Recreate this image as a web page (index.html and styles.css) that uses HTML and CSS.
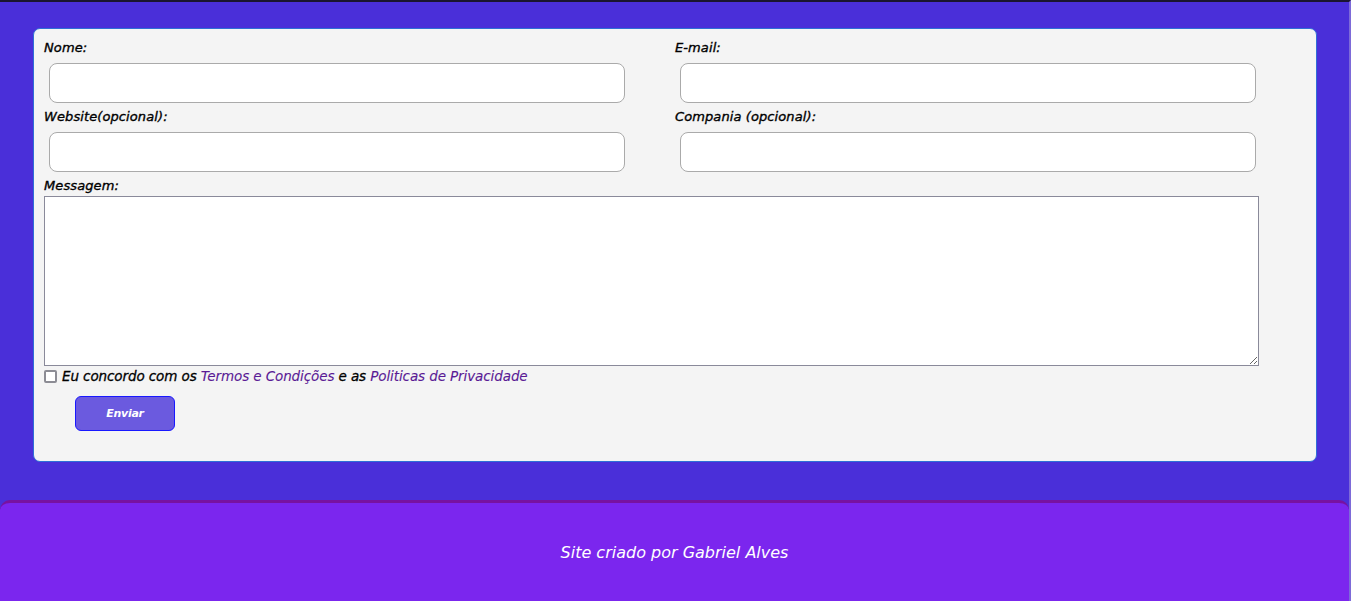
FILE: index.html
```html
<!DOCTYPE html>
<html lang="pt">
<head>
<meta charset="utf-8">
<title>Contato</title>
<link rel="stylesheet" href="styles.css">
</head>
<body>
<main class="page">
  <form class="card">
    <div class="grid">
      <div class="field">
        <label class="label">Nome:</label>
        <input class="input" type="text">
      </div>
      <div class="field">
        <label class="label">E-mail:</label>
        <input class="input" type="text">
      </div>
      <div class="field">
        <label class="label">Website(opcional):</label>
        <input class="input" type="text">
      </div>
      <div class="field">
        <label class="label">Compania (opcional):</label>
        <input class="input" type="text">
      </div>
    </div>
    <label class="label">Messagem:</label>
    <textarea class="textarea"></textarea>
    <div class="agree">
      <span class="check"></span>
      <span>Eu concordo com os <a class="link">Termos e Condições</a> e as <a class="link">Politicas de Privacidade</a></span>
    </div>
    <button class="btn" type="button">Enviar</button>
  </form>
</main>
<footer class="footer">
  <p>Site criado por Gabriel Alves</p>
</footer>
</body>
</html>
```
FILE: styles.css
```css
* { box-sizing: border-box; }
html, body { margin: 0; height: 100%; }
body {
  background: #4a2fd9;
  font-family: "DejaVu Sans", "Open Sans", sans-serif;
  font-style: italic;
  border-top: 2px solid #1a1530;
  border-right: 2px solid #7d6ad8;
  overflow: hidden;
}
.page {
  padding: 26px 0 38px 33px;
}
.card {
  width: 1284px;
  height: 434px;
  background: #f4f4f4;
  border: 1px solid #2f6fd6;
  border-radius: 7px;
  padding: 9px 10px 0 10px;
}
.grid {
  display: grid;
  grid-template-columns: 631px 631px;
}
.field { display: flex; flex-direction: column; }
.label {
  display: block;
  font-size: 13px;
  color: #000;
  height: 20px;
  line-height: 20px;
  letter-spacing: 0.1px;
  -webkit-text-stroke: 0.35px #000;
}
.input {
  margin: 5px 0 4px 5px;
  width: 576px;
  height: 40px;
  border: 1px solid #aaa;
  border-radius: 8px;
  background: #fff;
}
.textarea {
  display: block;
  margin: 0;
  width: 1215px;
  height: 170px;
  border: 1px solid #8a8a9a;
  background: #fff;
  resize: both;
}
.agree {
  display: flex;
  align-items: center;
  gap: 5px;
  height: 20px;
  font-size: 13.5px;
  letter-spacing: -0.1px;
  -webkit-text-stroke: 0.3px #000;
}
.check {
  display: block;
  width: 13px;
  height: 13px;
  border: 2px solid #8c8c94;
  border-radius: 2px;
  background: #fff;
}
.link { color: #5a1a95; -webkit-text-stroke: 0.1px #5a1a95; }
.btn {
  display: block;
  margin: 10px 0 0 31px;
  width: 100px;
  height: 35px;
  background: #6b5adf;
  border: 1px solid #1818ff;
  border-radius: 6px;
  color: #fff;
  font-family: inherit;
  font-style: italic;
  font-weight: 700;
  font-size: 11px;
  letter-spacing: -0.3px;
}
.footer {
  background: #7b26ee;
  border-top: 3px solid #7812a0;
  border-radius: 10px 10px 0 0;
  height: 101px;
  display: flex;
  align-items: center;
  justify-content: center;
}
.footer p {
  margin: 0;
  color: #fff;
  font-size: 16px;
  letter-spacing: 0;
}
```
